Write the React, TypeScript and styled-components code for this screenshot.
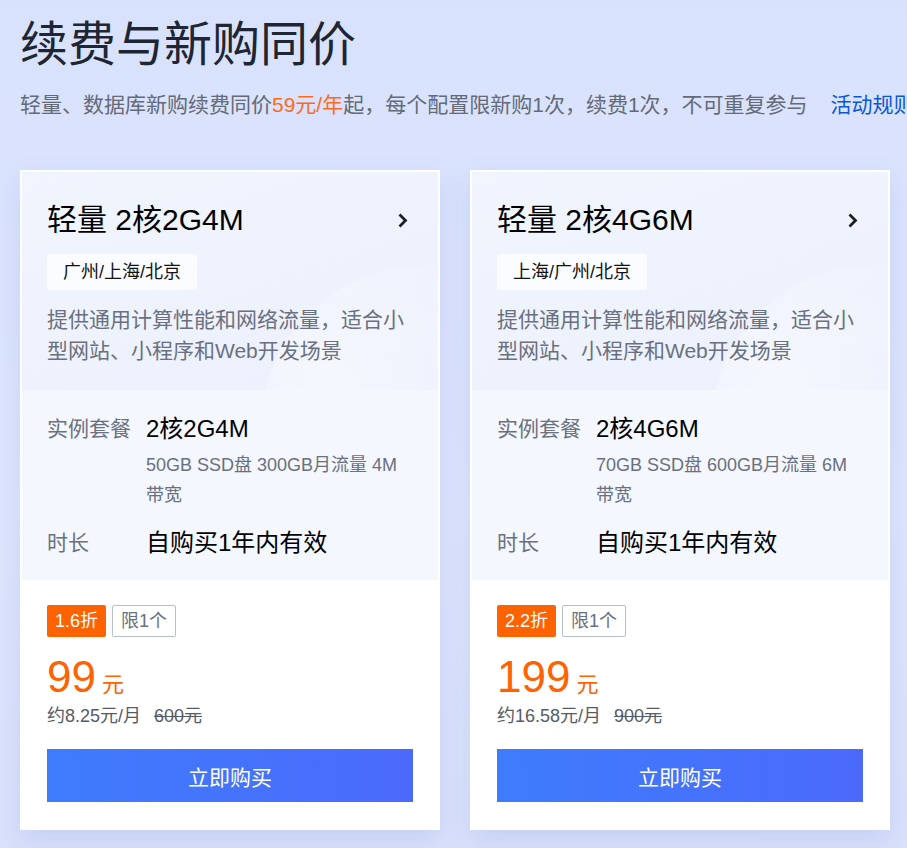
import React from "react";
import styled, { createGlobalStyle } from "styled-components";

const GlobalStyle = createGlobalStyle`
  html, body {
    margin: 0;
    padding: 0;
    background: #dae3fd;
    overflow: hidden;
  }
  body {
    font-family: "Liberation Sans", "Noto Sans CJK SC", sans-serif;
  }
`;

const Page = styled.div`
  width: 907px;
  height: 848px;
  padding: 20px 0 0 20px;
  box-sizing: border-box;
  background: linear-gradient(180deg, #d9e2fd 0%, #dde5fd 60%, #d9e1fb 100%);
`;

const Title = styled.h1`
  margin: 0;
  font-size: 48px;
  line-height: 50px;
  font-weight: 400;
  color: #1e2533;
`;

const Subtitle = styled.p`
  margin: 20px 0 0;
  font-size: 21px;
  line-height: 30px;
  color: #636a78;
  white-space: nowrap;
`;

const Hot = styled.span`
  color: #ff6a1a;
`;

const RuleLink = styled.a`
  margin-left: 23px;
  color: #0a56d8;
  text-decoration: none;
`;

const CardRow = styled.div`
  display: flex;
  gap: 30px;
  margin-top: 50px;
`;

const Card = styled.div`
  width: 420px;
  box-sizing: border-box;
  border: 2px solid #ffffff;
  background: #ffffff;
  box-shadow: 0 10px 24px rgba(110, 130, 210, 0.18);
  display: flex;
  flex-direction: column;
`;

const Head = styled.div`
  position: relative;
  overflow: hidden;
  padding: 28px 25px 24px;
  background: linear-gradient(160deg, #f1f5fe 0%, #ecf0fd 100%);

  &::after {
    content: "";
    position: absolute;
    right: -120px;
    bottom: -140px;
    width: 300px;
    height: 260px;
    border-radius: 50%;
    background: radial-gradient(ellipse at 30% 30%, rgba(255, 255, 255, 0.45), rgba(236, 240, 253, 0) 70%);
    transform: rotate(-30deg);
  }
`;

const HeadTop = styled.div`
  display: flex;
  align-items: center;
  justify-content: space-between;
  position: relative;
  z-index: 1;
`;

const CardTitle = styled.h2`
  margin: 0;
  font-size: 30px;
  line-height: 40px;
  font-weight: 400;
  color: #000000;
`;

const Chevron = styled.svg`
  width: 13px;
  height: 17px;
  margin-right: 4px;
`;

const Region = styled.span`
  position: relative;
  z-index: 1;
  display: inline-block;
  margin-top: 14px;
  height: 36px;
  line-height: 36px;
  padding: 0 16px;
  font-size: 18px;
  color: #111111;
  background: rgba(255, 255, 255, 0.7);
  border-radius: 2px;
`;

const Desc = styled.p`
  position: relative;
  z-index: 1;
  margin: 14px 0 0;
  font-size: 21px;
  line-height: 31px;
  color: #6a7080;
`;

const Specs = styled.div`
  padding: 22px 25px 20px;
  background: #f4f7fe;
  display: flex;
  flex-direction: column;
  gap: 16px;
`;

const SpecRow = styled.div`
  display: flex;
`;

const SpecLabel = styled.div`
  width: 99px;
  flex-shrink: 0;
  font-size: 21px;
  line-height: 34px;
  color: #6a7080;
`;

const SpecBody = styled.div`
  display: flex;
  flex-direction: column;
`;

const SpecValue = styled.div`
  font-size: 24px;
  line-height: 34px;
  color: #000000;
`;

const SpecNote = styled.div`
  margin-top: 4px;
  font-size: 18px;
  line-height: 30px;
  color: #6a7080;
`;

const Foot = styled.div`
  padding: 25px 25px 26px;
  background: #ffffff;
`;

const Badges = styled.div`
  display: flex;
  gap: 6px;
`;

const Badge = styled.span<{ $hot?: boolean }>`
  box-sizing: border-box;
  height: 32px;
  line-height: ${(p) => (p.$hot ? "32px" : "30px")};
  padding: 0 8px;
  font-size: 18px;
  border-radius: 2px;
  color: ${(p) => (p.$hot ? "#ffffff" : "#6a7080")};
  background: ${(p) => (p.$hot ? "#ff6200" : "#ffffff")};
  border: ${(p) => (p.$hot ? "none" : "1px solid #b9bec8")};
`;

const PriceLine = styled.div`
  margin-top: 15px;
  display: flex;
  align-items: baseline;
  gap: 6px;
  color: #ff6200;
`;

const Amount = styled.span`
  font-size: 44px;
  line-height: 50px;
`;

const Unit = styled.span`
  font-size: 22px;
`;

const Monthly = styled.div`
  margin-top: 2px;
  font-size: 18px;
  line-height: 24px;
  color: #555b68;
  display: flex;
  gap: 13px;
`;

const OldPrice = styled.span`
  text-decoration: line-through;
`;

const BuyButton = styled.button`
  display: block;
  width: 100%;
  height: 53px;
  margin-top: 21px;
  border: none;
  border-radius: 0;
  background: linear-gradient(90deg, #3f7cfd 0%, #4b6afb 100%);
  color: #ffffff;
  font-family: inherit;
  font-size: 21px;
  cursor: pointer;
`;

type Plan = {
  name: string;
  regions: string;
  spec: string;
  note: string;
  discount: string;
  price: string;
  monthly: string;
  old: string;
};

const plans: Plan[] = [
  {
    name: "轻量 2核2G4M",
    regions: "广州/上海/北京",
    spec: "2核2G4M",
    note: "50GB SSD盘 300GB月流量 4M 带宽",
    discount: "1.6折",
    price: "99",
    monthly: "约8.25元/月",
    old: "600元",
  },
  {
    name: "轻量 2核4G6M",
    regions: "上海/广州/北京",
    spec: "2核4G6M",
    note: "70GB SSD盘 600GB月流量 6M 带宽",
    discount: "2.2折",
    price: "199",
    monthly: "约16.58元/月",
    old: "900元",
  },
];

const PlanCard = ({ plan }: { plan: Plan }) => (
  <Card>
    <Head>
      <HeadTop>
        <CardTitle>{plan.name}</CardTitle>
        <Chevron viewBox="0 0 13 17">
          <path d="M3.5 2.5 L9.5 8.5 L3.5 14.5" fill="none" stroke="#1c1f26" strokeWidth="2.8" />
        </Chevron>
      </HeadTop>
      <Region>{plan.regions}</Region>
      <Desc>提供通用计算性能和网络流量，适合小型网站、小程序和Web开发场景</Desc>
    </Head>
    <Specs>
      <SpecRow>
        <SpecLabel>实例套餐</SpecLabel>
        <SpecBody>
          <SpecValue>{plan.spec}</SpecValue>
          <SpecNote>{plan.note}</SpecNote>
        </SpecBody>
      </SpecRow>
      <SpecRow>
        <SpecLabel>时长</SpecLabel>
        <SpecValue>自购买1年内有效</SpecValue>
      </SpecRow>
    </Specs>
    <Foot>
      <Badges>
        <Badge $hot>{plan.discount}</Badge>
        <Badge>限1个</Badge>
      </Badges>
      <PriceLine>
        <Amount>{plan.price}</Amount>
        <Unit>元</Unit>
      </PriceLine>
      <Monthly>
        <span>{plan.monthly}</span>
        <OldPrice>{plan.old}</OldPrice>
      </Monthly>
      <BuyButton>立即购买</BuyButton>
    </Foot>
  </Card>
);

export default function App() {
  return (
    <>
      <GlobalStyle />
      <Page>
        <Title>续费与新购同价</Title>
        <Subtitle>
          轻量、数据库新购续费同价<Hot>59元/年</Hot>起，每个配置限新购1次，续费1次，不可重复参与
          <RuleLink href="#">活动规则</RuleLink>
        </Subtitle>
        <CardRow>
          {plans.map((p) => (
            <PlanCard key={p.name} plan={p} />
          ))}
        </CardRow>
      </Page>
    </>
  );
}
